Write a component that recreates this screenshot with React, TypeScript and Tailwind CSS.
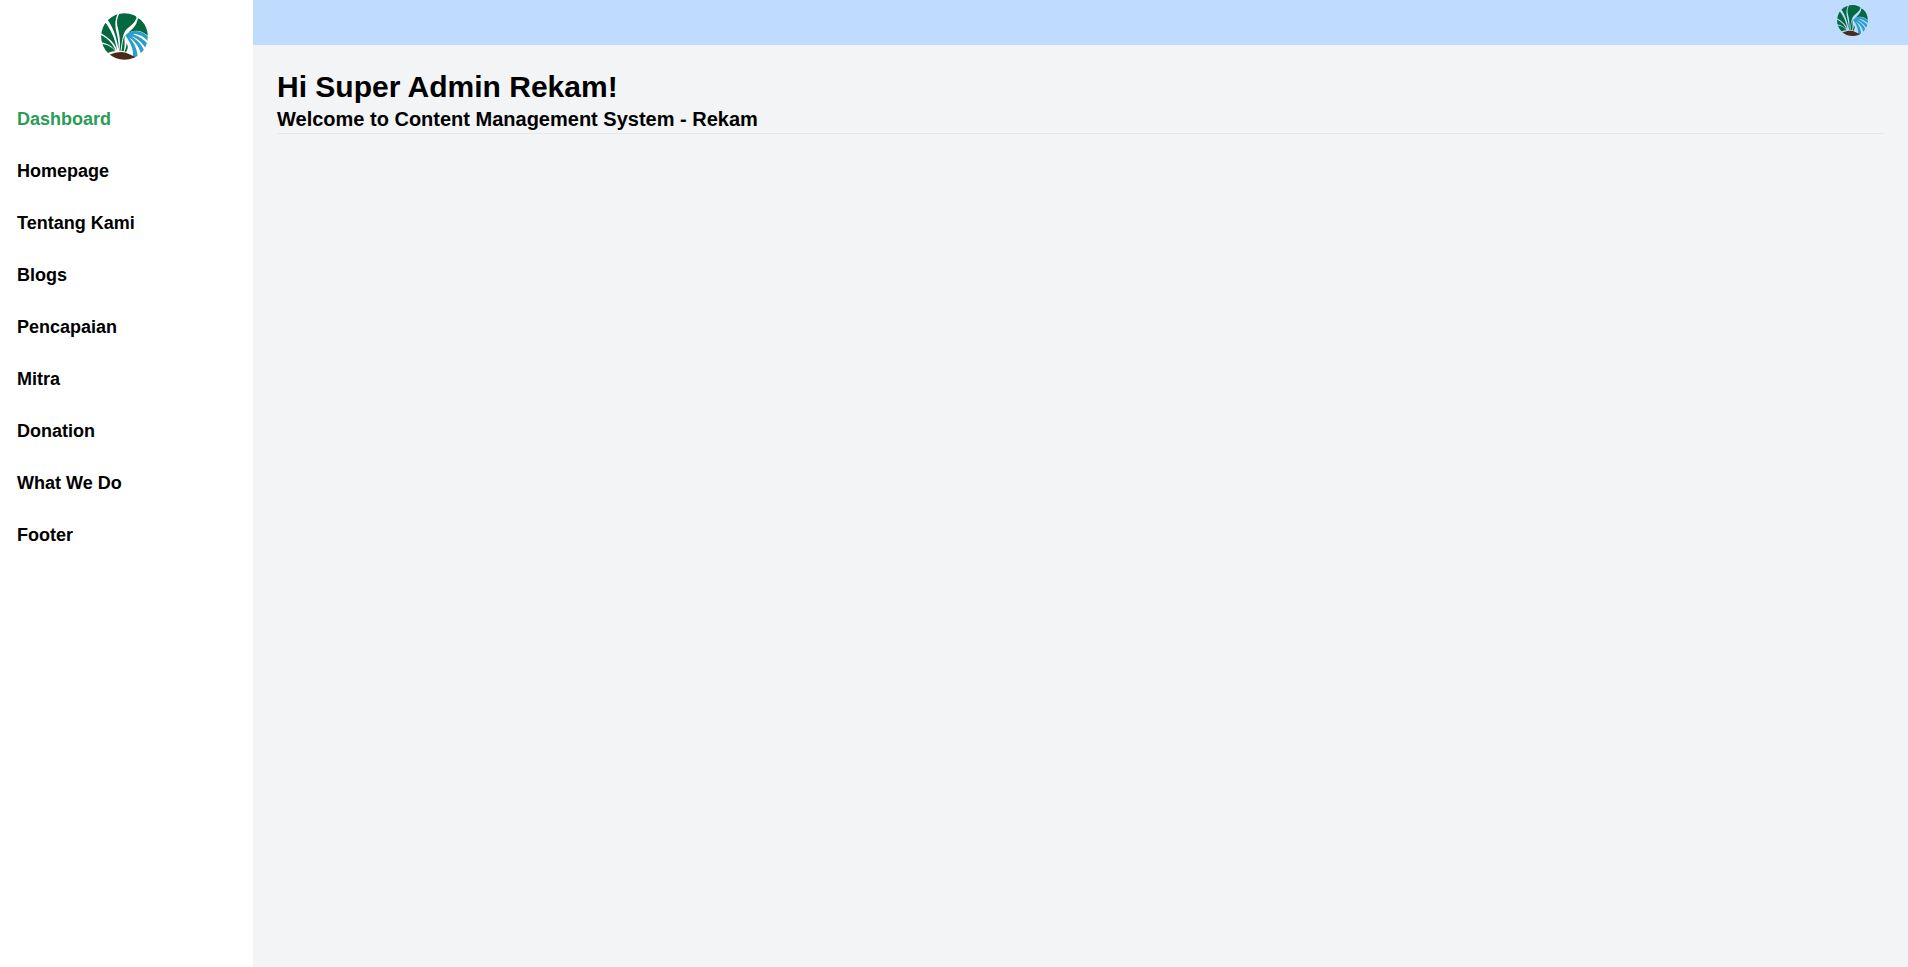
import { useId } from "react";

function Logo({ className }: { className: string }) {
  const disc = useId();
  return (
    <svg viewBox="20 18 140 140" className={className} role="img" aria-label="Rekam">
      <clipPath id={disc}>
        <circle cx="90" cy="88" r="69.5" />
      </clipPath>
      <g clipPath={`url(#${disc})`}>
        <g fill="#04693f">
          <path d="M38 36 L50 14 L73 14 C62 34 60 52 66 76 C71 94 73 108 72 126 C68 100 60 66 38 36Z" />
          <path d="M8 72 L31 44 C49 66 62 94 68 130 C60 106 44 90 8 72Z" />
          <path d="M8 78 C38 91 55 108 64 131 C50 114 36 106 8 104Z" />
          <path d="M8 109 C38 110 53 119 62 132 C48 132 36 138 22 148Z" />
          <path d="M78 14 L120 14 L126 32 C119 52 104 57 94 69 C84 82 82 108 78 131 L75 131 C78 104 76 84 70 62 C65 44 68 30 78 14Z" />
          <path d="M130 34 L170 50 L160 86 C140 68 118 66 99 79 C114 66 127 56 130 34Z" />
          <path d="M91 84 C88 98 93 110 88 131 L81 131 C84 112 84 96 91 84Z" />
          <path d="M96 108 C103 118 99 126 95 134 L90 133 C94 124 96 118 96 108Z" />
        </g>
        <g fill="#2a9dcc">
          <path d="M92 85 C108 66 142 66 166 94 L170 112 C148 88 132 80 116 81 C136 88 156 102 170 124 L162 138 C146 108 130 93 110 87 C128 98 146 114 154 144 L142 154 C138 122 122 102 104 91 C118 106 130 126 130 160 L115 149 C118 128 108 106 92 85Z" />
        </g>
        <path fill="#4a2b1b" d="M24 147 C48 143 60 134 80 134 C98 134 108 144 127 151 L110 165 L50 165Z" />
      </g>
    </svg>
  );
}

const items = ["Dashboard", "Homepage", "Tentang Kami", "Blogs", "Pencapaian", "Mitra", "Donation", "What We Do", "Footer"];

export default function App() {
  return (
    <div className="flex h-screen bg-gray-100 font-['Liberation_Sans',Arial,sans-serif] text-black">
      <aside className="flex w-[253px] shrink-0 flex-col bg-white">
        <div className="flex h-[93px] justify-center pt-[13px] pr-1">
          <Logo className="size-[47px]" />
        </div>
        <nav className="flex flex-col px-[5px]">
          {items.map((item, i) => (
            <a key={item} className={i === 0 ? "p-3 text-lg font-bold text-[#2a9d55]" : "p-3 text-lg font-bold"}>{item}</a>
          ))}
        </nav>
      </aside>
      <div className="flex flex-1 flex-col">
        <header className="flex h-[45px] items-start justify-end bg-[#bfdbfe] pt-[5px] pr-10">
          <Logo className="size-[31px]" />
        </header>
        <main className="p-6">
          <h1 className="text-3xl font-bold">Hi Super Admin Rekam!</h1>
          <h2 className="border-b border-gray-200 text-xl font-bold">Welcome to Content Management System - Rekam</h2>
        </main>
      </div>
    </div>
  );
}
